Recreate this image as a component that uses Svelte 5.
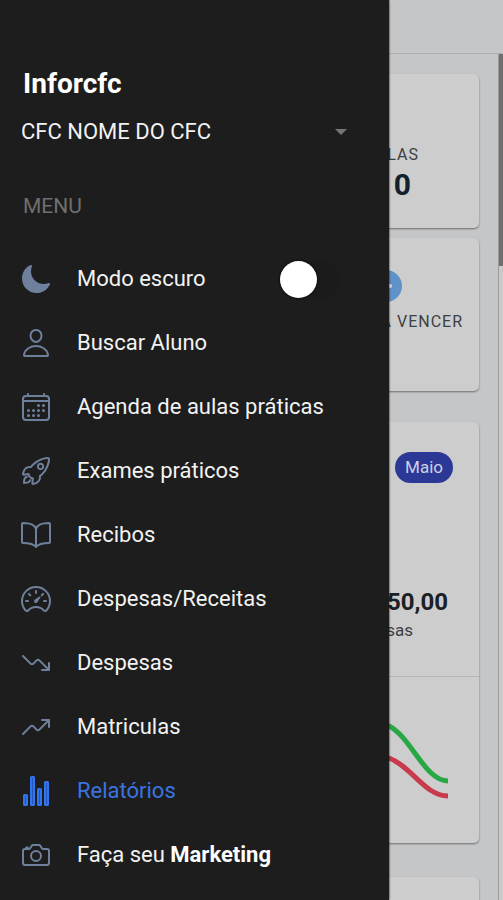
<script>
  let dark = $state(true);
  let company = $state('CFC NOME DO CFC');

  const items = [
    { label: 'Buscar Aluno', icon: 'person' },
    { label: 'Agenda de aulas práticas', icon: 'calendar' },
    { label: 'Exames práticos', icon: 'rocket' },
    { label: 'Recibos', icon: 'book' },
    { label: 'Despesas/Receitas', icon: 'speedometer' },
    { label: 'Despesas', icon: 'down' },
    { label: 'Matriculas', icon: 'up' },
    { label: 'Relatórios', icon: 'stats', active: true },
    { label: 'Faça seu ', strong: 'Marketing', icon: 'camera' }
  ];

  const strokes = {
    person: [
      'M344 144c-3.92 52.87-44 96-88 96s-84.15-43.12-88-96c-4-55 35-96 88-96s92 42 88 96z',
      'M256 304c-87 0-175.3 48-191.64 138.6C62.39 453.52 68.57 464 80 464h352c11.44 0 17.62-10.48 15.65-21.4C431.3 352 343 304 256 304z'
    ],
    calendar: [
      'M96 80h320a48 48 0 0148 48v288a48 48 0 01-48 48H96a48 48 0 01-48-48V128a48 48 0 0148-48z',
      'M128 48v32M384 48v32M464 160H48'
    ],
    rocket: [
      'M461.81 53.81a4.4 4.4 0 00-3.3-3.39c-54.38-13.3-180 34.09-248.13 102.17a294.9 294.9 0 00-33.09 39.08c-21-1.9-42-.3-59.88 7.5-50.49 22.2-65.18 80.18-69.28 105.07a9 9 0 009.8 10.4l81.07-8.9a180.29 180.29 0 001.1 18.3 18.15 18.15 0 005.3 11.09l31.39 31.39a18.15 18.15 0 0011.1 5.3 179.91 179.91 0 0018.19 1.1l-8.89 81a9 9 0 0010.39 9.79c24.9-4 83-18.69 105.07-69.17 7.8-17.9 9.4-38.79 7.6-59.69a293.91 293.91 0 0039.19-33.09c68.38-68 115.47-190.86 102.37-247.95zM298.66 213.67a42.7 42.7 0 1160.38 0 42.65 42.65 0 01-60.38 0z',
      'M109.64 352a45.06 45.06 0 00-26.35 12.84C65.67 382.52 64 448 64 448s65.52-1.67 83.15-19.31A44.73 44.73 0 00160 402.32'
    ],
    book: [
      'M256 160c16-63.16 76.43-95.41 208-96a15.94 15.94 0 0116 16v288a16 16 0 01-16 16c-128 0-177.45 25.81-208 64-30.37-38-80-64-208-64-9.88 0-16-8.05-16-17.93V80a15.94 15.94 0 0116-16c131.57.59 192 32.84 208 96zM256 160v288'
    ],
    speedometer: [
      'M256 64C132.3 64 32 164.2 32 287.9a223.18 223.18 0 0056.3 148.5c1.1 1.2 2.1 2.4 3.2 3.5a25.19 25.19 0 0037.1-.1 173.13 173.13 0 01254.8 0 25.19 25.19 0 0037.1.1l3.2-3.5A223.18 223.18 0 00480 287.9C480 164.2 379.7 64 256 64z',
      'M256 128v32M416 288h-32M128 288H96M165.49 197.49l-22.63-22.63M346.51 197.49l22.63-22.63'
    ],
    down: ['M352 368h112V256', 'M48 144l121.37 121.37a32 32 0 0045.26 0l50.74-50.74a32 32 0 0145.26 0L448 352'],
    up: ['M352 144h112v112', 'M48 368l121.37-121.37a32 32 0 0145.26 0l50.74 50.74a32 32 0 0045.26 0L448 160'],
    stats: [],
    camera: [
      'M350.54 148.68l-26.62-42.06C318.31 100.08 310.62 96 302 96h-92c-8.62 0-16.31 4.08-21.92 10.62l-26.62 42.06C155.85 155.23 148.62 160 140 160H80a32 32 0 00-32 32v192a32 32 0 0032 32h352a32 32 0 0032-32V192a32 32 0 00-32-32h-59c-8.65 0-16.85-4.77-22.46-11.32z',
      'M336 272a80 80 0 11-160 0 80 80 0 01160 0z',
      'M124 158v-22h-24v22'
    ]
  };

  const days = [[296, 232], [376, 232], [296, 312], [376, 312], [136, 312], [216, 312], [136, 392], [216, 392], [296, 392]];
  const bars = [[64, 320], [176, 32], [288, 224], [400, 112]];
</script>

<div class="app">
  <div class="page">
    <header class="toolbar"></header>
    <div class="scroller">
      <main>
        <section class="card stat">
          <span class="caption aulas">AULAS</span>
          <strong class="count">0</strong>
        </section>
        <section class="card due">
          <svg class="dot" viewBox="0 0 32 32" aria-hidden="true">
            <circle cx="16" cy="16" r="16" fill="#5f92c8" />
            <path d="M11 16h9" stroke="#d6dde5" stroke-width="4" stroke-linecap="round" />
          </svg>
          <span class="caption">A VENCER</span>
        </section>
        <section class="card finance">
          <div class="summary">
            <span class="month">Maio</span>
            <strong class="amount">50,00</strong>
            <span class="kind">Despesas</span>
          </div>
          <svg class="chart" viewBox="0 0 100 80" aria-hidden="true">
            <path d="M0 -4C18 -4 28 0 40 5C62 16 76 60 99 60" stroke="#28a745" />
            <path d="M0 30C18 30 28 33 40 37C62 45 76 75 99 75" stroke="#c83a4c" />
          </svg>
        </section>
        <section class="card next"></section>
      </main>
      <div class="track"><div class="thumb"></div></div>
    </div>
  </div>

  <aside class="drawer">
    <h1>Inforcfc</h1>
    <div class="company">
      <select aria-label="CFC" bind:value={company}>
        <option>CFC NOME DO CFC</option>
      </select>
      <svg class="caret" viewBox="0 0 12 6" aria-hidden="true"><path d="M0 0h12L6 6z" fill="#757575" /></svg>
    </div>
    <h2>MENU</h2>
    <nav>
      <label class="row">
        <svg class="icon" viewBox="0 0 512 512" aria-hidden="true">
          <path fill="currentColor" d="M264 480A232 232 0 0132 248c0-94 54-178.28 137.61-214.67a16 16 0 0121.06 21.06C181.07 76.43 176 104.66 176 136c0 110.28 89.72 200 200 200 31.34 0 59.57-5.07 81.61-14.67a16 16 0 0121.06 21.06C442.28 426 358 480 264 480z" />
        </svg>
        <span class="text">Modo escuro</span>
        <input type="checkbox" role="switch" bind:checked={dark} />
      </label>
      {#each items as item}
        <a class="row" class:active={item.active} href="#{item.icon}">
          <svg class="icon" viewBox="0 0 512 512" aria-hidden="true">
            {#each strokes[item.icon] as d}
              <path class="line" {d} />
            {/each}
            {#if item.icon === 'calendar'}
              {#each days as [x, y]}
                <circle cx={x} cy={y} r="24" fill="currentColor" />
              {/each}
            {:else if item.icon === 'speedometer'}
              <path fill="currentColor" d="M326.1 231.9l-47.5 75.5a31 31 0 01-7 7 30.11 30.11 0 01-35-49l75.5-47.5a10.23 10.23 0 0111.7 0 10.06 10.06 0 012.3 14z" />
            {:else if item.icon === 'stats'}
              {#each bars as [x, y]}
                <rect class="bar" {x} {y} width="48" height={480 - y} rx="8" />
              {/each}
            {/if}
          </svg>
          <span class="text">{item.label}{#if item.strong}<b>{item.strong}</b>{/if}</span>
        </a>
      {/each}
    </nav>
  </aside>
</div>

<style>
  :global(body) {
    margin: 0;
  }
  .app,
  .app * {
    box-sizing: border-box;
  }
  .app {
    position: relative;
    height: 100vh;
    overflow: hidden;
    font-family: Roboto, 'Liberation Sans', sans-serif;
    background: #c4c6c8;
  }
  .page {
    display: flex;
    flex-direction: column;
    height: 100%;
  }
  .toolbar {
    flex: none;
    height: 54px;
    border-bottom: 1px solid #adafb1;
  }
  .scroller {
    flex: 1;
    min-height: 0;
    display: flex;
    overflow: hidden;
  }
  main {
    flex: 1;
    display: flex;
    flex-direction: column;
    padding: 20px 19px;
  }
  .track {
    width: 5px;
    background: #cacaca;
    border-left: 1px solid #9b9b9b;
  }
  .thumb {
    height: 212px;
    background: #6f6f6f;
  }
  .card {
    flex: none;
    display: flex;
    flex-direction: column;
    align-items: flex-end;
    background: #cdcdcd;
    border-radius: 5px;
    box-shadow: 0 1px 2px rgba(0, 0, 0, 0.45);
  }
  .caption {
    font-size: 16px;
    line-height: 20px;
    letter-spacing: 1px;
    color: #3c4043;
  }
  .stat {
    height: 154px;
    padding: 71px 60px 0 0;
  }
  .count {
    padding-right: 8px;
    font-size: 30px;
    line-height: 40px;
    color: #14202a;
  }
  .due {
    height: 153px;
    margin-top: 10px;
    padding: 32px 16px 0 0;
  }
  .dot {
    width: 32px;
    height: 32px;
    margin: 0 61px 10px 0;
  }
  .finance {
    height: 421px;
    margin-top: 31px;
  }
  .summary {
    display: flex;
    flex-direction: column;
    align-items: flex-end;
    align-self: stretch;
    height: 255px;
    padding: 30px 26px 0 0;
    border-bottom: 1px solid #b5b7b8;
  }
  .month {
    padding: 0 10px;
    border-radius: 16px;
    font-size: 17px;
    line-height: 31px;
    color: #cdd0e6;
    background: #2c3896;
  }
  .amount {
    margin-top: 103px;
    padding-right: 5px;
    font-size: 24px;
    line-height: 32px;
    color: #1a2024;
  }
  .kind {
    padding-right: 40px;
    font-size: 17px;
    line-height: 24px;
    color: #3c4043;
  }
  .chart {
    width: 100px;
    height: 80px;
    margin: 44px 30px 0 0;
    overflow: visible;
  }
  .chart path {
    fill: none;
    stroke-width: 5;
  }
  .next {
    height: 154px;
    margin-top: 34px;
  }
  .drawer {
    position: absolute;
    inset: 0 auto 0 0;
    width: 100%;
    max-width: 389px;
    padding-top: 66px;
    background: #1d1d1d;
    box-shadow: 0 0 2px #000;
    color: #f2f2f2;
  }
  h1 {
    margin: 0 0 0 23px;
    font-size: 28px;
    line-height: 36px;
    font-weight: 700;
    color: #fff;
  }
  .company {
    position: relative;
    margin: 12px 42px 0 21px;
  }
  select {
    display: block;
    width: 100%;
    height: 36px;
    padding: 0;
    border: 0;
    appearance: none;
    background: none;
    color: inherit;
    font: 22px/36px Roboto, 'Liberation Sans', sans-serif;
  }
  .caret {
    position: absolute;
    right: 0;
    top: 15px;
    width: 12px;
    height: 6px;
    pointer-events: none;
  }
  h2 {
    margin: 40px 0 0 23px;
    font-size: 21px;
    line-height: 32px;
    font-weight: 400;
    color: #6f6f6f;
  }
  nav {
    margin-top: 25px;
  }
  .row {
    display: flex;
    align-items: center;
    height: 64px;
    padding: 0 49px 0 20px;
    color: inherit;
    text-decoration: none;
  }
  .icon {
    flex: none;
    width: 32px;
    height: 32px;
    margin-right: 25px;
    color: #6f809c;
  }
  .line {
    fill: none;
    stroke: currentColor;
    stroke-width: 32;
    stroke-linecap: round;
    stroke-linejoin: round;
  }
  .bar {
    fill: #2455b8;
    stroke: #3274ee;
    stroke-width: 32;
    stroke-linejoin: round;
  }
  .text {
    flex: 1;
    font-size: 22px;
    line-height: 32px;
    white-space: nowrap;
  }
  .active .text {
    color: #3b74e0;
  }
  b {
    color: #fff;
  }
  input {
    appearance: none;
    display: flex;
    width: 60px;
    height: 37px;
    margin: 0;
    border-radius: 19px;
    background: #1b1b1b;
  }
  input::before {
    content: '';
    width: 37px;
    height: 37px;
    border-radius: 50%;
    background: #fff;
    box-shadow: 0 0 3px #000;
  }
</style>
